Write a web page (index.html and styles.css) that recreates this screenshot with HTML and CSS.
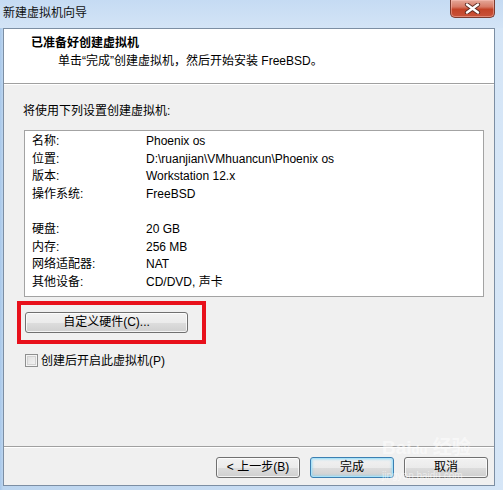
FILE: index.html
```html
<!DOCTYPE html>
<html lang="zh-CN">
<head>
<meta charset="utf-8">
<title>新建虚拟机向导</title>
<link rel="stylesheet" href="styles.css">
</head>
<body>
<div class="window">
  <div class="titlebar">
    <span class="title">新建虚拟机向导</span>
    <div class="close">
      <svg width="17" height="11" viewBox="0 0 17 11">
        <path d="M3 1.5 L14 9.5 M14 1.5 L3 9.5" stroke="#5a2a22" stroke-width="4.2" stroke-linecap="round"/>
        <path d="M3 1.5 L14 9.5 M14 1.5 L3 9.5" stroke="#ffffff" stroke-width="2.4" stroke-linecap="round"/>
      </svg>
    </div>
  </div>
  <div class="client">
    <div class="header">
      <div class="h-title">已准备好创建虚拟机</div>
      <div class="h-sub">单击“完成”创建虚拟机，然后开始安装 FreeBSD。</div>
    </div>
    <div class="body">
      <div class="intro">将使用下列设置创建虚拟机:</div>
      <div class="summary">
        <span>名称:</span><span>Phoenix os</span>
        <span>位置:</span><span>D:\ruanjian\VMhuancun\Phoenix os</span>
        <span>版本:</span><span>Workstation 12.x</span>
        <span>操作系统:</span><span>FreeBSD</span>
        <span>&nbsp;</span><span>&nbsp;</span>
        <span>硬盘:</span><span>20 GB</span>
        <span>内存:</span><span>256 MB</span>
        <span>网络适配器:</span><span>NAT</span>
        <span>其他设备:</span><span>CD/DVD, 声卡</span>
      </div>
      <div class="highlight">
        <button class="btn custom">自定义硬件(C)...</button>
      </div>
      <label class="check-row">
        <span class="checkbox"></span>
        <span>创建后开启此虚拟机(P)</span>
      </label>
    </div>
    <div class="footer">
      <button class="btn nav">&lt; 上一步(B)</button>
      <button class="btn nav default">完成</button>
      <button class="btn nav">取消</button>
    </div>
  </div>
  <div class="watermark">
    <span class="wm-bai">Bai<span class="wm-paw">du</span> 经验</span>
    <span class="wm-url">jingyan.baidu.com</span>
  </div>
</div>
</body>
</html>
```

FILE: styles.css
```css
* { box-sizing: border-box; }

html, body {
  margin: 0;
  padding: 0;
}

body {
  width: 503px;
  height: 490px;
  overflow: hidden;
  font-family: "Liberation Sans", "Noto Sans CJK SC", sans-serif;
  font-size: 12px;
  color: #000;
}

.window {
  position: relative;
  width: 503px;
  height: 490px;
  display: flex;
  flex-direction: column;
  background: linear-gradient(to right, #a9c8ea 0px, #bcd5ef 3px, #c9ddf3 60%, #d6e6f7 100%);
}

.titlebar {
  height: 28px;
  display: flex;
  justify-content: space-between;
  align-items: flex-start;
  padding-left: 3px;
  background: linear-gradient(to bottom, #c5dbf3, #d3e4f6);
}

.title {
  line-height: 26px;
  font-size: 12px;
  color: #111;
}

.close {
  width: 45px;
  height: 18px;
  margin-right: 8px;
  border: 1px solid #7b3b30;
  border-top: none;
  border-radius: 0 0 5px 5px;
  background: linear-gradient(to bottom, #e4a899 0%, #d77a66 40%, #c34328 55%, #c8533a 100%);
  box-shadow: inset 0 0 0 1px rgba(255, 200, 190, 0.45);
  display: flex;
  align-items: center;
  justify-content: center;
}

.client {
  height: 458px;
  margin-left: 3px;
  margin-right: 8px;
  border: 1px solid #7c8ea3;
  background: #f0f0f0;
  display: flex;
  flex-direction: column;
}

.header {
  background: #fff;
  padding: 5px 0 13px 27px;
  border-bottom: 1px solid #a0a0a0;
  box-shadow: 0 1px 0 #ffffff;
  line-height: 18px;
}

.h-title {
  font-weight: bold;
}

.h-sub {
  padding-left: 27px;
}

.body {
  flex: 1;
  padding-left: 20px;
  line-height: 18px;
}

.intro {
  margin-top: 18px;
  margin-left: -1px;
}

.summary {
  margin-top: 10px;
  width: 460px;
  height: 167px;
  border: 1px solid #a3a3a3;
  background: #fff;
  padding: 2px 0 0 7px;
  display: grid;
  grid-template-columns: 114px 1fr;
  grid-auto-rows: 17.625px;
  line-height: 17.625px;
}

.highlight {
  margin-top: 4px;
  margin-left: -7px;
  width: 189px;
  height: 43px;
  border: 4px solid #e8101b;
  padding: 7px 0 0 4px;
}

.btn {
  font-family: "Liberation Sans", "Noto Sans CJK SC", sans-serif;
  font-size: 12px;
  color: #000;
  height: 21px;
  padding: 0;
  border: 1px solid #707070;
  border-radius: 3px;
  background: linear-gradient(to bottom, #f2f2f2 0%, #ebebeb 50%, #dddddd 51%, #cfcfcf 100%);
  box-shadow: inset 0 0 0 1px rgba(255, 255, 255, 0.75);
  line-height: 19px;
}

.custom {
  width: 163px;
  display: block;
}

.check-row {
  margin-top: 10px;
  margin-left: 1px;
  display: flex;
  align-items: center;
  gap: 3px;
  height: 13px;
}

.checkbox {
  width: 13px;
  height: 13px;
  border: 1px solid #8e8f8f;
  background: linear-gradient(135deg, #dcdcdc, #f6f6f6);
  box-shadow: inset 0 0 0 1px #f4f4f4, inset 0 0 0 2px #d2d2d2;
}

.footer {
  border-top: 1px solid #a0a0a0;
  box-shadow: inset 0 1px 0 #ffffff;
  padding: 10px 6px 7px 0;
  display: flex;
  justify-content: flex-end;
  gap: 10px;
}

.nav {
  width: 84px;
}

.default {
  border-color: #3c7fb1;
  box-shadow: inset 0 0 0 1px #a9e2f8, inset 0 0 2px 2px rgba(130, 210, 245, 0.45);
  background: linear-gradient(to bottom, #eaf6fd 0%, #d9f0fc 50%, #bee6fd 51%, #a7d9f5 100%);
  background: linear-gradient(to bottom, #f2f2f2 0%, #ebebeb 50%, #dddddd 51%, #cfcfcf 100%);
}

.watermark {
  position: absolute;
  left: 382px;
  top: 438px;
  display: flex;
  flex-direction: column;
  color: rgba(255, 255, 255, 0.55);
  pointer-events: none;
}

.wm-bai {
  font-size: 19px;
  line-height: 20px;
  font-weight: bold;
}

.wm-paw {
  font-size: 13px;
}

.wm-url {
  font-size: 10px;
  line-height: 12px;
  margin-top: 10px;
}
```
